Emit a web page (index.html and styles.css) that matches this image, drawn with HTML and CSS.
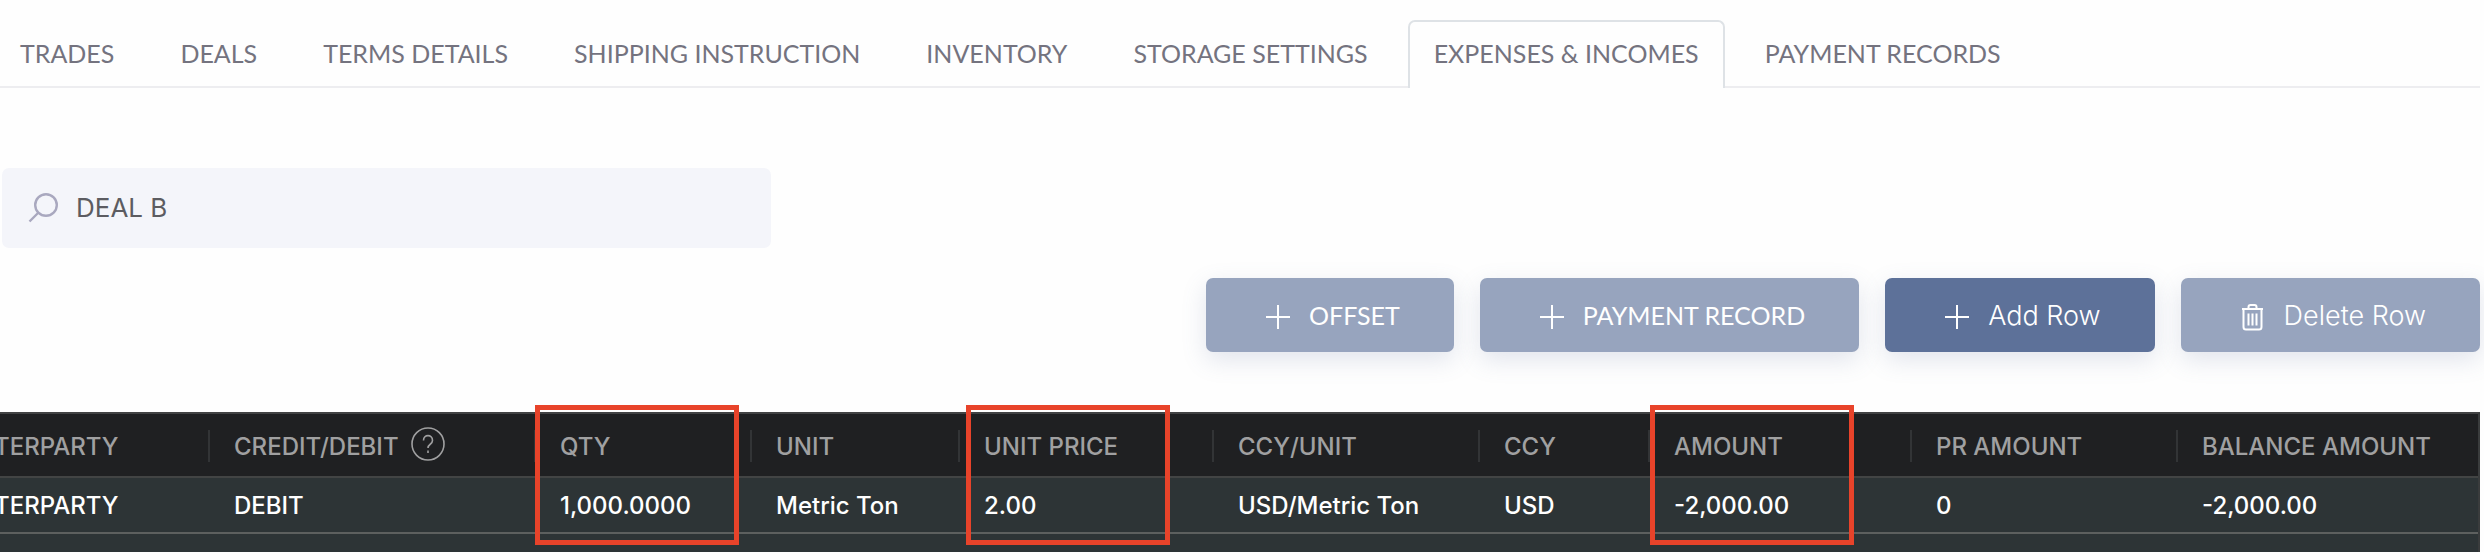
FILE: index.html
```html
<!DOCTYPE html>
<html lang="en">
<head>
<meta charset="utf-8">
<title>Expenses &amp; Incomes</title>
<link rel="stylesheet" href="styles.css">
</head>
<body>
<main class="page">
  <nav class="tabs" aria-label="Sections">
    <a class="tab" href="#trades">TRADES</a>
    <a class="tab" href="#deals">DEALS</a>
    <a class="tab" href="#terms">TERMS DETAILS</a>
    <a class="tab" href="#shipping">SHIPPING INSTRUCTION</a>
    <a class="tab" href="#inventory">INVENTORY</a>
    <a class="tab" href="#storage">STORAGE SETTINGS</a>
    <a class="tab tab-active" href="#expenses" aria-current="page">EXPENSES &amp; INCOMES</a>
    <a class="tab" href="#payments">PAYMENT RECORDS</a>
  </nav>

  <label class="search">
    <svg class="search-icon" viewBox="0 0 30 30" aria-hidden="true"><circle cx="18" cy="12" r="10.8"/><path d="M10.5 19.5 1.5 28.5"/></svg>
    <input class="search-input" type="text" value="DEAL B" aria-label="Search">
  </label>

  <div class="actions">
    <button class="btn btn-muted" type="button">
      <svg class="btn-icon" viewBox="0 0 24 24" aria-hidden="true"><path d="M12 0v24M0 12h24"/></svg>OFFSET</button>
    <button class="btn btn-muted" type="button">
      <svg class="btn-icon" viewBox="0 0 24 24" aria-hidden="true"><path d="M12 0v24M0 12h24"/></svg>PAYMENT RECORD</button>
    <button class="btn btn-row" type="button">
      <svg class="btn-icon" viewBox="0 0 24 24" aria-hidden="true"><path d="M12 0v24M0 12h24"/></svg>Add Row</button>
    <button class="btn btn-row btn-muted" type="button">
      <svg class="btn-icon" viewBox="0 0 24 24" aria-hidden="true"><path d="M1 4h21M7.500 4V2Q7.500 0 9.500 0h4Q15.500 0 15.500 2V4M2.500 4v18q0 2.500 2.500 2.500h13q2.500 0 2.500-2.500V4M7.500 8.500v12M11.500 8.500v12M15.500 8.500v12"/></svg>Delete Row</button>
  </div>

  <section class="grid">
    <div class="grid-scroll">
      <table class="table">
        <colgroup>
          <col class="c-party"><col class="c-side"><col class="c-qty"><col class="c-unit"><col class="c-price"><col class="c-rate"><col class="c-ccy"><col class="c-amount"><col class="c-pr"><col>
        </colgroup>
        <thead>
          <tr>
            <th scope="col">TERPARTY</th>
            <th scope="col"><span class="head-help">CREDIT/DEBIT
              <svg class="help" viewBox="0 0 34 34" aria-hidden="true"><circle cx="17" cy="17" r="16"/><path d="M12.500 13.500c0-6.500 9-6.500 9 0 0 4-4.500 3.500-4.500 7.500M17 23.500v2.500"/></svg></span></th>
            <th scope="col">QTY</th>
            <th scope="col">UNIT</th>
            <th scope="col">UNIT PRICE</th>
            <th scope="col">CCY/UNIT</th>
            <th scope="col">CCY</th>
            <th scope="col">AMOUNT</th>
            <th scope="col">PR AMOUNT</th>
            <th scope="col">BALANCE AMOUNT</th>
          </tr>
        </thead>
        <tbody>
          <tr>
            <td>TERPARTY</td>
            <td>DEBIT</td>
            <td>1,000.0000</td>
            <td>Metric Ton</td>
            <td>2.00</td>
            <td>USD/Metric Ton</td>
            <td>USD</td>
            <td>-2,000.00</td>
            <td>0</td>
            <td>-2,000.00</td>
          </tr>
        </tbody>
      </table>
    </div>
    <div class="mark mark-qty"></div>
    <div class="mark mark-price"></div>
    <div class="mark mark-amount"></div>
  </section>
</main>
</body>
</html>
```
FILE: styles.css
```css
* { box-sizing: border-box; }

html, body { height: 100%; }

body {
  margin: 0;
  overflow: hidden;
  background: #fefefe;
  font-family: Inter, "Liberation Sans", sans-serif;
}

.page {
  display: flex;
  flex-direction: column;
  min-height: 100%;
  padding: 20px 4px 0 0;
}

.tabs {
  display: flex;
  gap: 14px;
  border-bottom: 2px solid #ededf0;
}

.tab {
  margin-bottom: -2px;
  padding: 14px 24px 18px;
  border: 2px solid transparent;
  border-bottom: 0;
  color: #74737f;
  font-family: Lato, Inter, sans-serif;
  font-size: 25px;
  line-height: 34px;
  text-decoration: none;
  white-space: nowrap;
}

.tab:first-child { padding-left: 18px; }

.tab-active {
  border-color: #dee2e6;
  border-radius: 7px 7px 0 0;
  background: #fefefe;
}

.search {
  display: flex;
  align-items: center;
  gap: 18px;
  width: 31%;
  height: 80px;
  margin: 80px 0 0 2px;
  padding: 0 26px;
  border-radius: 7px;
  background: #f4f5fa;
}

.search-icon {
  flex: none;
  width: 30px;
  height: 30px;
  fill: none;
  stroke: #a9a8bf;
  stroke-width: 2.4;
}

.search-input {
  flex: 1;
  min-width: 0;
  padding: 0 0 2px;
  border: 0;
  outline: 0;
  background: none;
  color: #5c5c61;
  font-family: inherit;
  font-size: 26px;
}

.actions {
  display: flex;
  justify-content: flex-end;
  gap: 26px;
  margin-top: 30px;
}

.btn {
  display: flex;
  align-items: center;
  gap: 19px;
  height: 74px;
  padding: 0 54px 0 60px;
  border: 0;
  border-radius: 7px;
  background: #5d7199;
  box-shadow: 0 8px 24px rgba(93, 113, 153, 0.18);
  color: #fff;
  font-family: Lato, Inter, sans-serif;
  font-size: 25px;
  white-space: nowrap;
}

.btn-row {
  font-family: Inter, sans-serif;
  font-size: 27px;
  font-weight: 300;
}

.btn-muted { background: #97a4be; }

.btn-icon {
  width: 24px;
  height: 24px;
  margin-top: 4px;
  overflow: visible;
  fill: none;
  stroke: #fff;
  stroke-width: 2;
}

.grid {
  position: relative;
  flex: 1;
  display: flex;
  margin-top: 60px;
}

.grid-scroll {
  flex: 1;
  min-width: 0;
  overflow: hidden;
  border-top: 2px solid #414243;
  border-right: 2px solid #3a3c3d;
  background: #2d3436;
}

.table {
  width: calc(100% + 30px);
  margin-left: -30px;
  border-collapse: separate;
  border-spacing: 0;
  table-layout: fixed;
}

.c-party { width: 240px; }
.c-side { width: 326px; }
.c-qty { width: 216px; }
.c-unit { width: 208px; }
.c-price { width: 254px; }
.c-rate { width: 266px; }
.c-ccy { width: 170px; }
.c-amount { width: 262px; }
.c-pr { width: 266px; }

.table th {
  height: 64px;
  padding: 4px 0 0 24px;
  border-bottom: 2px solid #424444;
  background: linear-gradient(#323436, #323436) right 16px / 2px 32px no-repeat #1f2022;
  background-position: right 16px;
  color: #a0a0a1;
  font-size: 24px;
  font-weight: 500;
  line-height: 34px;
  text-align: left;
  white-space: nowrap;
}

.table th:last-child { background: #1f2022; }

.table td {
  height: 56px;
  padding: 0 0 0 24px;
  border-bottom: 2px solid #5d605f;
  color: #fff;
  font-size: 24px;
  font-weight: 500;
  white-space: nowrap;
}

.head-help {
  display: flex;
  align-items: center;
  gap: 12px;
}

.help {
  width: 34px;
  height: 34px;
  margin-top: -6px;
  fill: none;
  stroke: #a0a0a1;
  stroke-width: 1.6;
}

.mark {
  position: absolute;
  top: -7px;
  width: 204px;
  height: 140px;
  border: 5px solid #e8432a;
}

.mark-qty { left: 535px; }
.mark-price { left: 966px; }
.mark-amount { left: 1650px; }
```
